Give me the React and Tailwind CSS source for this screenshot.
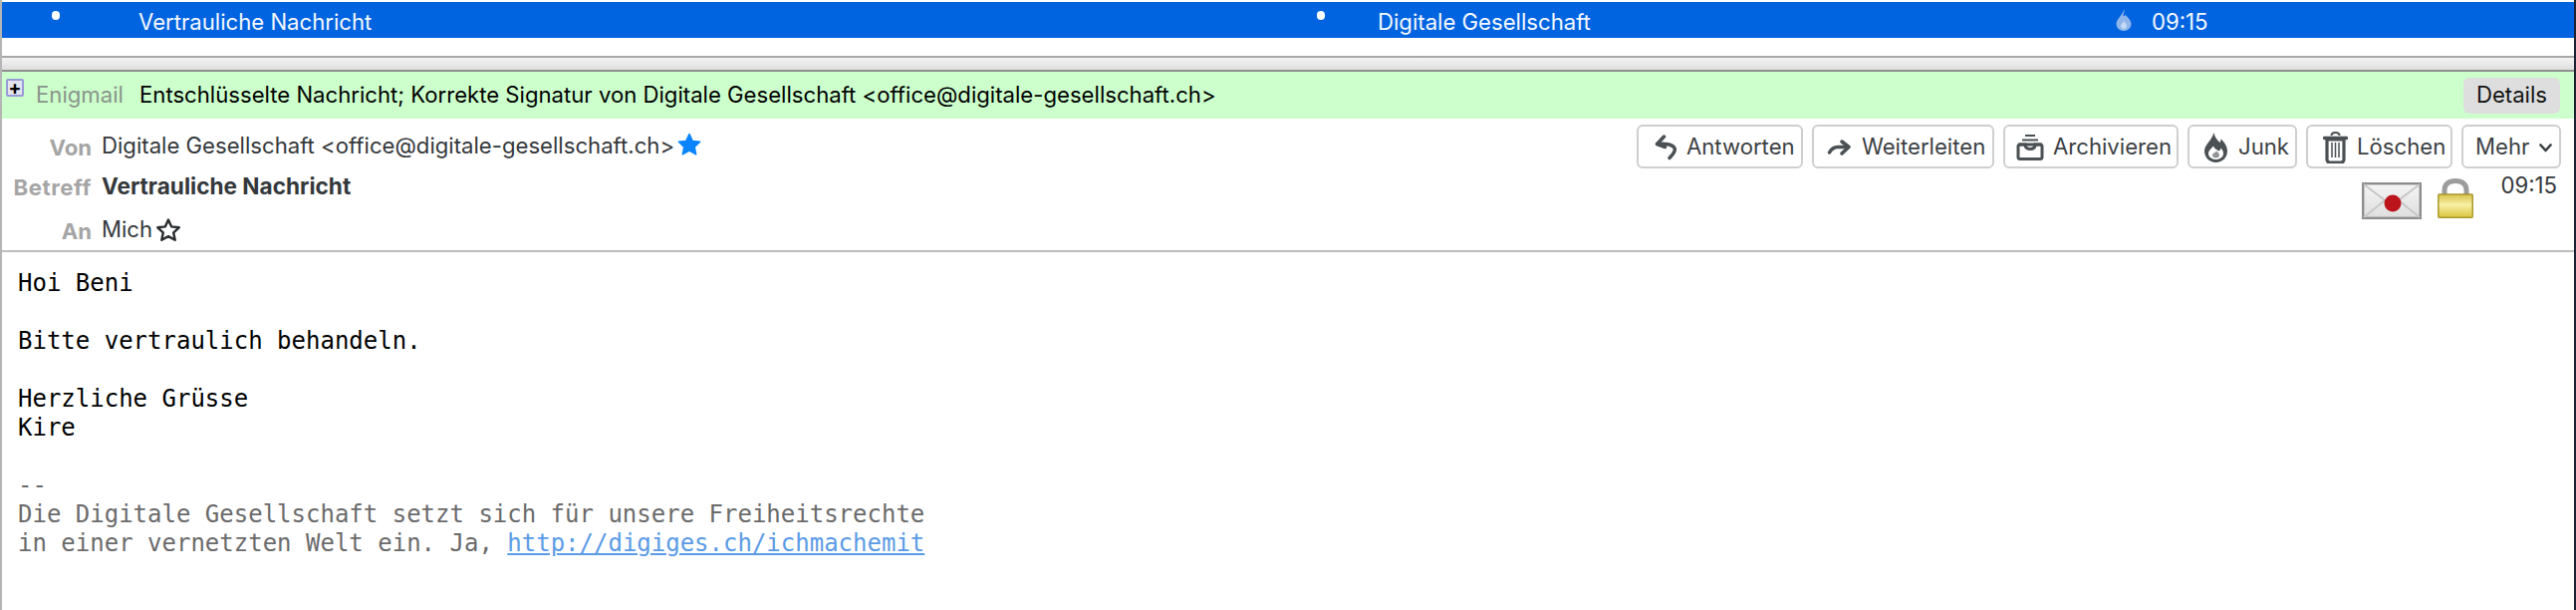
import React from "react";

const ReplyIcon = () => (
  <svg className="w-[22px] h-[26px]" viewBox="0 0 22 26" fill="none" stroke="#4a5053" strokeWidth="3.500" strokeLinecap="round" strokeLinejoin="round">
    <path d="M9.500 2 2.500 9.500l8 3" />
    <path d="M3 9.500c7-1 15 .5 17 4 1.500 3-1.500 6.500-5 10" />
  </svg>
);

const ForwardIcon = () => (
  <svg className="w-[24px] h-[16px]" viewBox="0 0 24 16" fill="none" stroke="#4a5053" strokeWidth="3.500" strokeLinecap="round" strokeLinejoin="round">
    <path d="M15 2 22 7.500 15 14" />
    <path d="M21 7.500H11c-4 0-6.500 2-8.500 5.500" />
  </svg>
);

const ArchiveIcon = () => (
  <svg className="w-[28px] h-[26px]" viewBox="0 0 28 26" fill="none">
    <path d="M9 1h10M6 5.500h16" stroke="#4a5053" strokeWidth="2" />
    <rect x="2" y="10" width="24" height="14.500" rx="2" stroke="#4a5053" strokeWidth="3" />
    <path d="M2 10h7c0 3 2 4.500 5 4.500s5-1.500 5-4.500h7" stroke="#4a5053" strokeWidth="3" />
  </svg>
);

const JunkIcon = () => (
  <svg className="w-[23px] h-[30px]" viewBox="0 0 23 30">
    <path
      fillRule="evenodd"
      fill="#4a5053"
      d="M9.500 0c1 5 3 7 6 10 .6-1 1-2 1-3.500 4 3.500 6.500 8 6.500 12 0 6.500-5 11.500-11.500 11.500S0 25 0 18.500C0 12 7.500 8 9.500 0Zm-.5 13.500c-2 2.500-5 4.500-5 7.500 0 3.500 3.500 6 7.500 6s7.500-2.500 7.500-6c0-2-1-4-2.500-5.500-.2 1.500-1 2.500-2 3-2-1-5-3-5.500-5Z"
    />
    <path fill="#4a5053" opacity=".6" d="M12 18.500c1.200 1 3 2.300 3 4S13.500 25.500 11.500 25.500 8 24.500 8 22.500c0-1 1-1.800 2-2.300.8-.4 1.600-1 2-1.700Z" />
  </svg>
);

const TrashIcon = () => (
  <svg className="w-[25px] h-[32px]" viewBox="0 0 25 32" fill="none">
    <path d="M8.500 4c0-2 1.500-3 4-3s4 1 4 3" stroke="#4a5053" strokeWidth="2" />
    <path d="M1.500 6.500h22" stroke="#4a5053" strokeWidth="3.500" strokeLinecap="round" />
    <path d="M4 8h17v20c0 2-1 3-3 3H7c-2 0-3-1-3-3V8Z" stroke="#4a5053" strokeWidth="3.200" />
    <path d="M9 11v15M12.500 11v15M16 11v15" stroke="#4a5053" strokeWidth="1.500" />
  </svg>
);

const ChevronIcon = () => (
  <svg className="w-[13px] h-[9px]" viewBox="0 0 13 9" fill="none" stroke="#3a3f42" strokeWidth="2.600" strokeLinecap="round" strokeLinejoin="round">
    <path d="M1.500 1.500 6.500 7l5-5.500" />
  </svg>
);

const STAR = "M12 1.500l3.200 6.900 7.500.9-5.500 5.100 1.500 7.400L12 18.100l-6.700 3.700 1.500-7.400L1.300 9.300l7.500-.9z";

const SealedEnvelope = () => (
  <svg className="w-[60px] h-[37px]" viewBox="0 0 60 37">
    <defs>
      <linearGradient id="envBody" x1="0" y1="0" x2="0" y2="1">
        <stop offset="0" stopColor="#f5f5f5" />
        <stop offset="1" stopColor="#dedede" />
      </linearGradient>
    </defs>
    <rect x="1.200" y="1.200" width="57.600" height="34.600" fill="url(#envBody)" stroke="#8d8d8d" strokeWidth="2.400" />
    <path d="M2 2l28 21L58 2M2 35l21-17M58 35 37 18" fill="none" stroke="#c6c6c6" strokeWidth="1.800" />
    <circle cx="31" cy="21" r="8.500" fill="#bb151b" />
  </svg>
);

const GoldLock = () => (
  <svg className="w-[36px] h-[40px]" viewBox="0 0 36 40">
    <defs>
      <linearGradient id="lockBody" x1="0" y1="0" x2="0" y2="1">
        <stop offset="0" stopColor="#d8c24a" />
        <stop offset=".45" stopColor="#f8f0a4" />
        <stop offset="1" stopColor="#dcc53f" />
      </linearGradient>
    </defs>
    <path d="M7 18v-6C7 5.500 11.500 2.500 18 2.500S29 5.500 29 12v6" fill="none" stroke="#9c9c9c" strokeWidth="5" />
    <rect x=".8" y="16" width="34.400" height="23.200" rx="1" fill="url(#lockBody)" stroke="#a89a2e" strokeWidth="1.500" />
  </svg>
);

const ActionButton = ({ children, className }) => (
  <button className={`flex items-center justify-start h-[44px] pt-[2px] border-2 border-[#cfcfcf] rounded-[6px] bg-white text-[#3c4144] text-[22.15px] whitespace-nowrap ${className}`}>
    {children}
  </button>
);

const App = () => {
  return (
    <div className="w-[2586px] h-[612px] overflow-hidden bg-white border-l-2 border-r-2 border-l-[#b5b5b5] border-r-[#1c2433] font-['Inter',sans-serif] text-[22.15px]">
      {/* message list row */}
      <div className="h-[2px]" />
      <div className="h-[36px] bg-[#0064e1] text-[#f4f8fe] flex items-center relative">
        <span className="absolute left-[50px] top-[9px] w-[8px] h-[9px] rounded-full bg-white" />
        <span className="absolute left-[137px] top-[4px]">Vertrauliche Nachricht</span>
        <span className="absolute left-[1320px] top-[9px] w-[8px] h-[9px] rounded-full bg-white" />
        <span className="absolute left-[1381px] top-[4px]">Digitale Gesellschaft</span>
        <svg className="absolute left-[2121px] top-[7px] w-[18px] h-[22px]" viewBox="0 0 18 22">
          <path fill="#8fb6ea" d="M9.500 0c.5 3-1 4.500-1 7 1 .5 1.500 0 2-1 3 2.500 6 6 6 9 0 4-3.500 7-7.500 7S1.500 19 1.500 15c0-5 6.500-9 8-15Z" />
          <path fill="#c3d8f4" d="M9 12c1 1.500 3 3 3 5s-1.500 3-3 3-3-1-3-3 2.500-3 3-5Z" />
        </svg>
        <span className="absolute left-[2158px] top-[4px]">09:15</span>
      </div>
      <div className="h-[18px]" />
      <div className="h-[16px] border-y-2 border-t-[#a8a8a8] border-b-[#8f8f8f] bg-gradient-to-b from-[#f3f3f3] to-[#dedede]" />

      {/* enigmail bar */}
      <div className="h-[47px] bg-[#ccffcc] flex items-center relative pl-[34px] text-black">
        <span className="absolute left-[4px] top-[7px] w-[18px] h-[18px] bg-[#e4e4f0] border-2 border-[#9a9ad8] rounded-[2px] flex items-center justify-center text-[19px] leading-none font-bold text-black">
          +
        </span>
        <span className="text-[#8a948a] w-[104px]">Enigmail</span>
        <span>Entschlüsselte Nachricht; Korrekte Signatur von Digitale Gesellschaft &lt;office@digitale-gesellschaft.ch&gt;</span>
        <button className="ml-auto mr-[14px] w-[97px] h-[36px] rounded-[6px] bg-[#dedede] text-[#111]">Details</button>
      </div>

      {/* headers */}
      <div className="h-[134px] flex border-b-2 border-[#bdbdbd] pt-[6px]">
        <div className="w-[90px] shrink-0 flex flex-col items-end font-bold text-[#a5a5a5] pt-[3px]">
          <span className="h-[40px] leading-[40px]">Von</span>
          <span className="h-[40px] leading-[40px] tracking-[0.6px]">Betreff</span>
          <span className="h-[41px] leading-[41px] mt-[4px]">An</span>
        </div>
        <div className="ml-[10px] flex flex-col text-[#34383b] pt-[2px]">
          <div className="h-[40px] flex items-center gap-[3px]">
            <span>Digitale Gesellschaft &lt;office@digitale-gesellschaft.ch&gt;</span>
            <svg className="w-[24px] h-[24px] -mt-[3px]" viewBox="0 0 24 24"><path d={STAR} fill="#0a84ff" stroke="#0a84ff" strokeWidth="1.500" strokeLinejoin="round" /></svg>
          </div>
          <div className="h-[40px] pt-[2px] flex items-center font-bold text-[22.6px]">Vertrauliche Nachricht</div>
          <div className="h-[41px] mt-[5px] flex items-center gap-[4px]">
            <span>Mich</span>
            <svg className="w-[24px] h-[24px]" viewBox="0 0 24 24"><path d={STAR} fill="none" stroke="#2a2e30" strokeWidth="2.400" strokeLinejoin="round" /></svg>
          </div>
        </div>
        <div className="ml-auto mr-[13px] flex flex-col items-end">
          <div className="flex gap-[9px]">
            <ActionButton className="w-[167px] pl-[16px] gap-[10px]"><ReplyIcon />Antworten</ActionButton>
            <ActionButton className="w-[183px] pl-[13px] gap-[11px]"><ForwardIcon />Weiterleiten</ActionButton>
            <ActionButton className="w-[176px] pl-[11px] gap-[9px]"><ArchiveIcon />Archivieren</ActionButton>
            <ActionButton className="w-[110px] pl-[15px] gap-[11px]"><JunkIcon />Junk</ActionButton>
            <ActionButton className="w-[147px] pl-[15px] gap-[9px]"><TrashIcon />Löschen</ActionButton>
            <ActionButton className="w-[100px] pl-[12px] gap-[10px]">Mehr<ChevronIcon /></ActionButton>
          </div>
          <div className="flex items-start mt-[4px]">
            <div className="mt-[10px]"><SealedEnvelope /></div>
            <div className="ml-[16px] mt-[6px]"><GoldLock /></div>
            <span className="ml-[27px] mr-[4px] text-[#34383b] leading-[26px]">09:15</span>
          </div>
        </div>
      </div>

      {/* body */}
      <div className="pt-[17px] pl-[16px] font-['DejaVu_Sans_Mono',monospace] text-[24px] leading-[29px] text-black whitespace-pre">
        <p>Hoi Beni</p>
        <p>&nbsp;</p>
        <p>Bitte vertraulich behandeln.</p>
        <p>&nbsp;</p>
        <p>Herzliche Grüsse</p>
        <p>Kire</p>
        <p>&nbsp;</p>
        <div className="text-[#6b6b6b]">
          <p>-- </p>
          <p>Die Digitale Gesellschaft setzt sich für unsere Freiheitsrechte</p>
          <p>in einer vernetzten Welt ein. Ja, <a className="text-[#5b9be6] underline" href="#">http://digiges.ch/ichmachemit</a></p>
        </div>
      </div>
    </div>
  );
};

export default App;
